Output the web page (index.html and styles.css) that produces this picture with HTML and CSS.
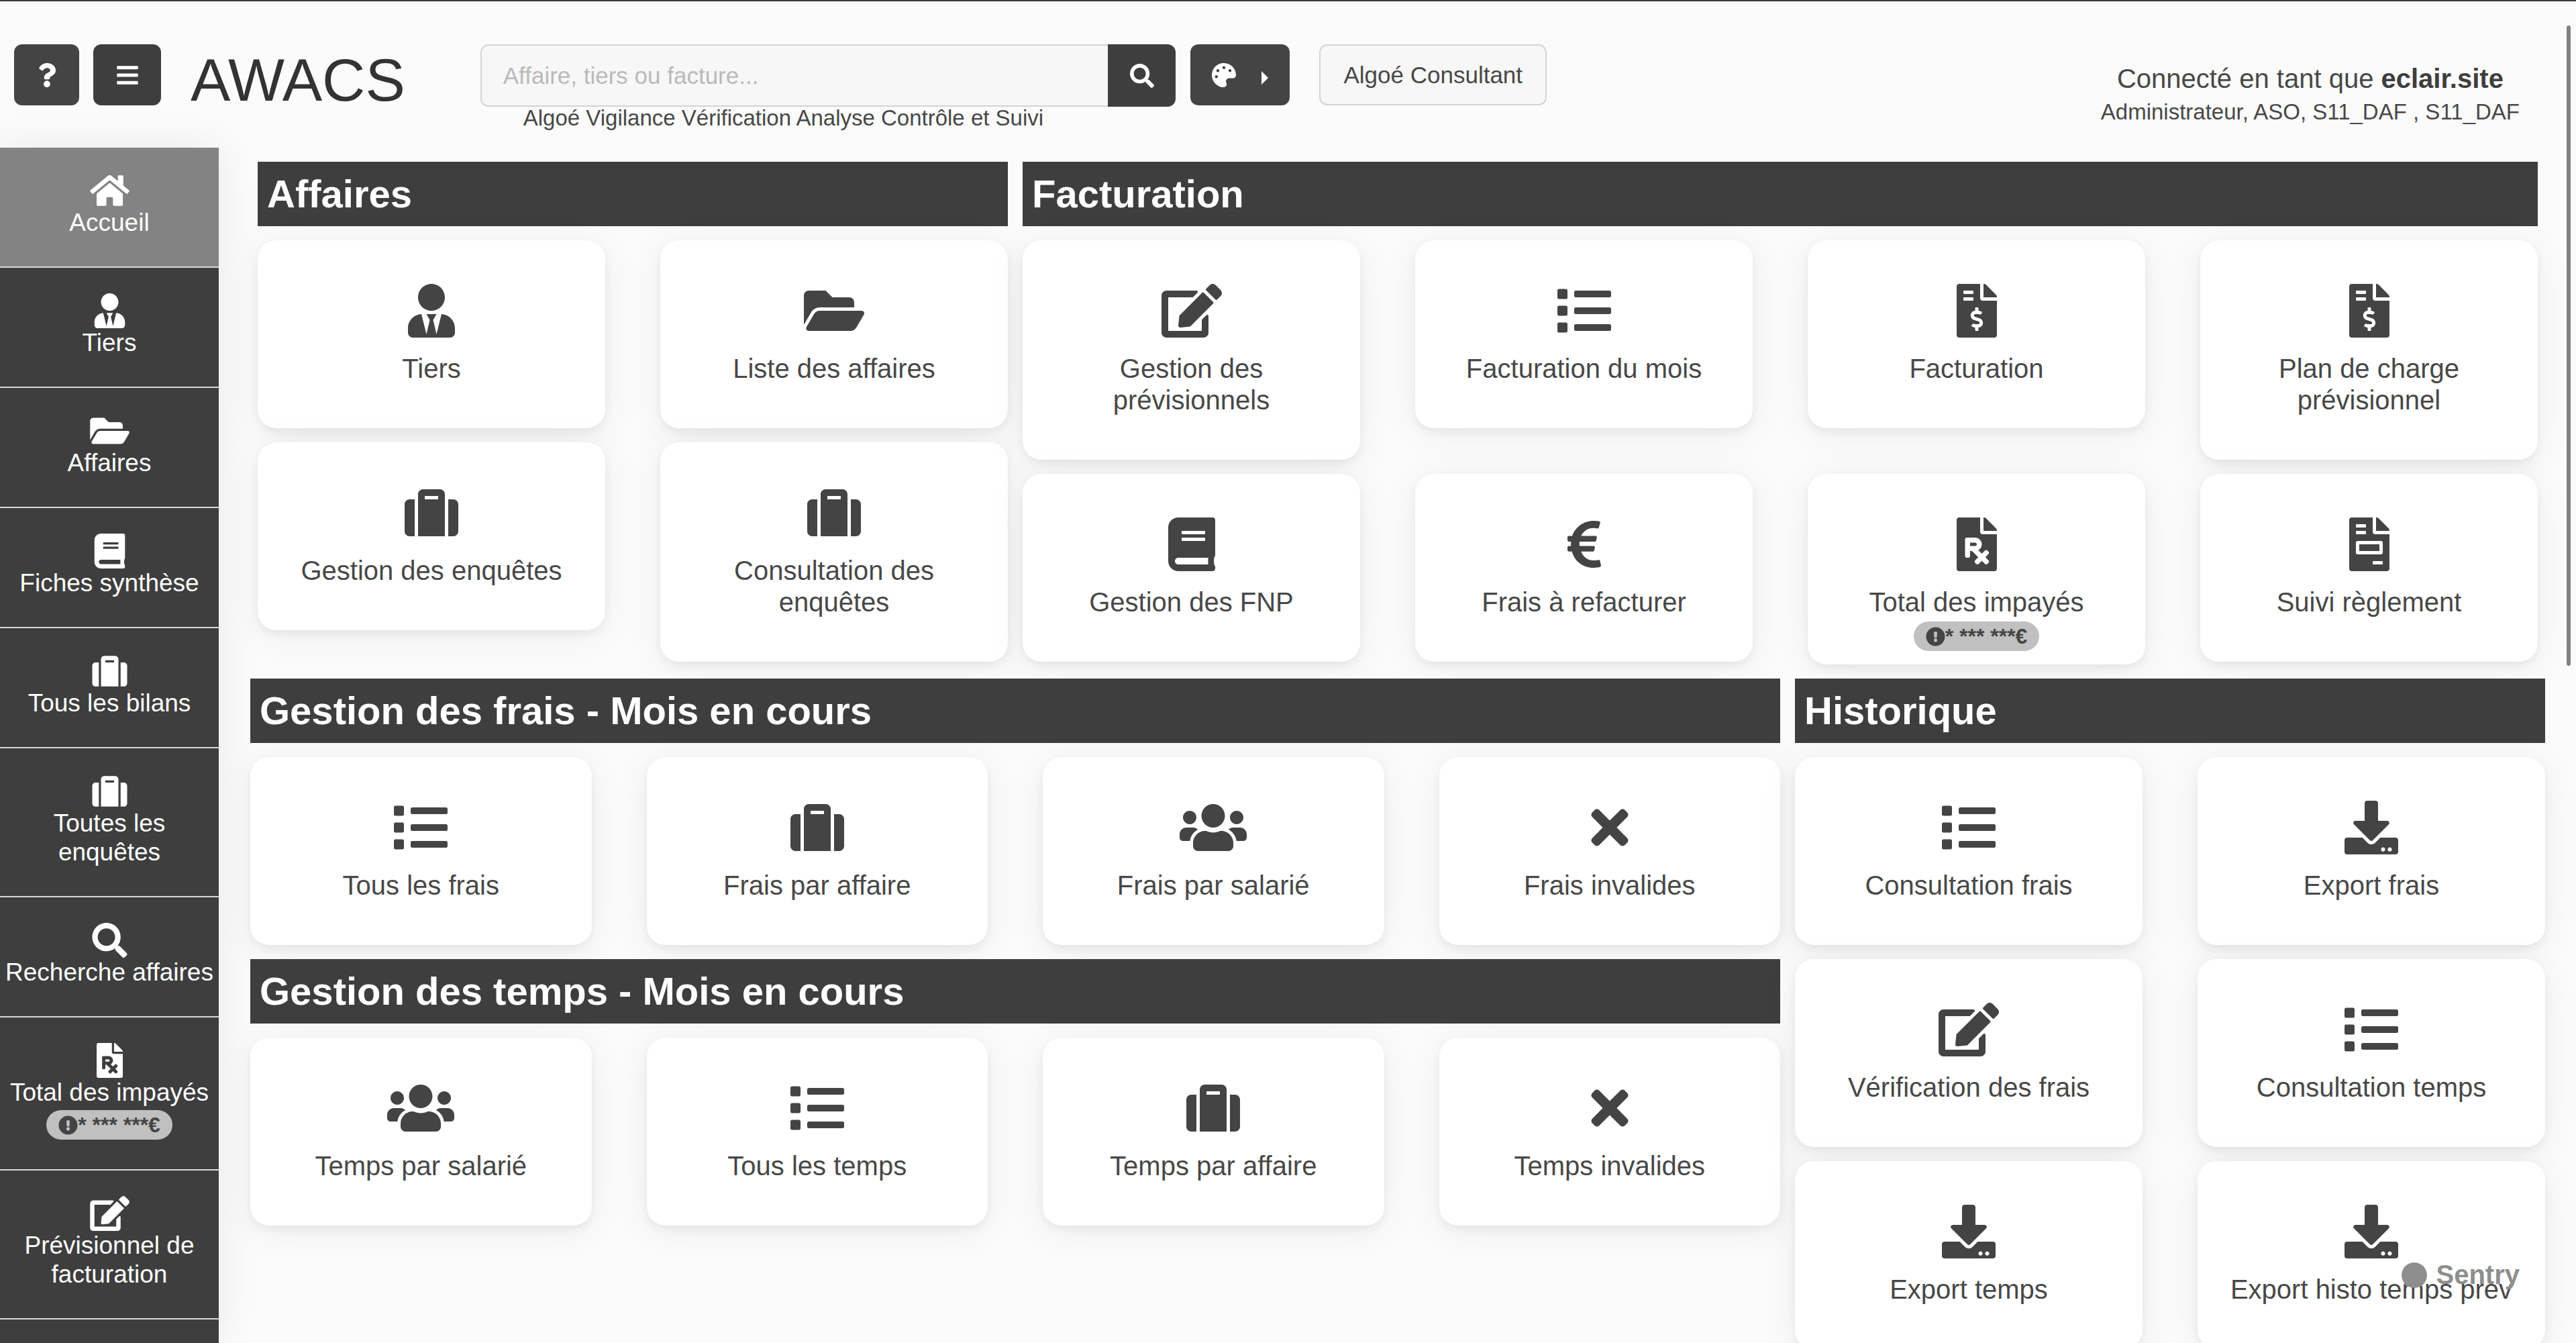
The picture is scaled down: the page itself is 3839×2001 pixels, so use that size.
FILE: index.html
```html
<!DOCTYPE html>
<html lang="fr">
<head>
<meta charset="utf-8">
<meta name="viewport" content="width=device-width, initial-scale=1">
<title>AWACS - Accueil</title>
<link rel="stylesheet" href="styles.css">
</head>
<body>
<svg class="sprite" aria-hidden="true">
  <symbol id="home" viewBox="0 0 576 512"><path d="M280.37 148.26L96 300.11V464a16 16 0 0 0 16 16l112.06-.29a16 16 0 0 0 15.92-16V368a16 16 0 0 1 16-16h64a16 16 0 0 1 16 16v95.64a16 16 0 0 0 16 16.05L464 480a16 16 0 0 0 16-16V300L295.67 148.26a12.19 12.19 0 0 0-15.3 0zM571.6 251.47L488 182.56V44.05a12 12 0 0 0-12-12h-56a12 12 0 0 0-12 12v72.61L318.47 43a48 48 0 0 0-61 0L4.34 251.47a12 12 0 0 0-1.6 16.9l25.5 31A12 12 0 0 0 45.15 301l235.22-193.74a12.19 12.19 0 0 1 15.3 0L530.9 301a12 12 0 0 0 16.9-1.6l25.5-31a12 12 0 0 0-1.7-16.93z"/></symbol>
  <symbol id="user-tie" viewBox="0 0 448 512"><path d="M224 256c70.7 0 128-57.3 128-128S294.7 0 224 0 96 57.3 96 128s57.3 128 128 128zm95.8 32.6L272 480l-32-136 32-56h-96l32 56-32 136-47.8-191.4C56.9 292 0 350.3 0 422.4V464c0 26.5 21.5 48 48 48h352c26.5 0 48-21.5 48-48v-41.6c0-72.1-56.9-130.4-128.2-133.8z"/></symbol>
  <symbol id="folder-open" viewBox="0 0 576 512"><path d="M572.694 292.093L500.27 416.248A63.997 63.997 0 0 1 444.989 448H45.025c-18.523 0-30.064-20.093-20.731-36.093l72.424-124.155A64 64 0 0 1 152 256h399.964c18.523 0 30.064 20.093 20.73 36.093zM152 224h328v-48c0-26.51-21.49-48-48-48H272l-64-64H48C21.49 64 0 85.49 0 112v278.046l69.077-118.418C86.214 242.25 117.989 224 152 224z"/></symbol>
  <symbol id="book" viewBox="0 0 448 512"><path d="M448 360V24c0-13.3-10.7-24-24-24H96C43 0 0 43 0 96v320c0 53 43 96 96 96h328c13.3 0 24-10.7 24-24v-16c0-7.5-3.5-14.3-8.9-18.7-4.2-15.4-4.2-59.3 0-74.7 5.4-4.3 8.9-11.1 8.9-18.6zM128 134c0-3.3 2.7-6 6-6h212c3.3 0 6 2.7 6 6v20c0 3.3-2.7 6-6 6H134c-3.3 0-6-2.7-6-6v-20zm0 64c0-3.3 2.7-6 6-6h212c3.3 0 6 2.7 6 6v20c0 3.3-2.7 6-6 6H134c-3.3 0-6-2.7-6-6v-20zm253.4 250H96c-17.7 0-32-14.3-32-32 0-17.6 14.4-32 32-32h285.4c-1.9 17.1-1.9 46.9 0 64z"/></symbol>
  <symbol id="suitcase" viewBox="0 0 512 512"><path d="M128 480h256V80c0-26.5-21.5-48-48-48H176c-26.5 0-48 21.5-48 48v400zm64-384h128v32H192V96zm320 80v256c0 26.5-21.5 48-48 48h-48V128h48c26.5 0 48 21.5 48 48zM96 480H48c-26.5 0-48-21.5-48-48V176c0-26.5 21.5-48 48-48h48v352z"/></symbol>
  <symbol id="search" viewBox="0 0 512 512"><path d="M505 442.7L405.3 343c-4.5-4.5-10.6-7-17-7H372c27.6-35.3 44-79.7 44-128C416 93.1 322.9 0 208 0S0 93.1 0 208s93.1 208 208 208c48.3 0 92.7-16.4 128-44v16.3c0 6.4 2.5 12.5 7 17l99.7 99.7c9.4 9.4 24.6 9.4 33.9 0l28.3-28.3c9.4-9.4 9.4-24.6.1-34zM208 336c-70.7 0-128-57.2-128-128 0-70.7 57.2-128 128-128 70.7 0 128 57.2 128 128 0 70.7-57.2 128-128 128z"/></symbol>
  <symbol id="file-rx" viewBox="0 0 384 512"><path d="M224 136V0H24C10.7 0 0 10.7 0 24v464c0 13.3 10.7 24 24 24h336c13.3 0 24-10.7 24-24V160H248c-13.2 0-24-10.8-24-24zm68.53 179.48l11.31 11.31c6.25 6.25 6.25 16.38 0 22.63l-29.9 29.9L304 409.38c6.25 6.25 6.25 16.38 0 22.63l-11.31 11.31c-6.25 6.25-16.38 6.25-22.63 0L240 413.25l-30.06 30.06c-6.25 6.25-16.38 6.25-22.63 0L176 432c-6.25-6.25-6.25-16.38 0-22.63l30.06-30.06L146.74 320H128v48c0 8.84-7.16 16-16 16H96c-8.84 0-16-7.16-16-16V208c0-8.84 7.16-16 16-16h80c35.35 0 64 28.65 64 64 0 24.22-13.62 45.05-33.46 55.92L240 345.38l29.9-29.9c6.25-6.25 16.38-6.25 22.63 0zM176 272h-48v-32h48c8.82 0 16 7.18 16 16s-7.18 16-16 16zm208-150.1v6.1H256V0h6.1c6.4 0 12.5 2.5 17 7l97.9 98c4.5 4.5 7 10.6 7 16.9z"/></symbol>
  <symbol id="edit" viewBox="0 0 576 512"><path d="M402.6 83.2l90.2 90.2c3.8 3.8 3.8 10 0 13.8L274.4 405.6l-92.8 10.3c-12.4 1.4-22.9-9.1-21.5-21.5l10.3-92.8L388.8 83.2c3.8-3.8 10-3.8 13.8 0zm162-22.9l-48.8-48.8c-15.2-15.2-39.9-15.2-55.2 0l-35.4 35.4c-3.8 3.8-3.8 10 0 13.8l90.2 90.2c3.8 3.8 10 3.8 13.8 0l35.4-35.4c15.2-15.3 15.2-40 0-55.2zM384 346.2V448H64V128h229.8c3.2 0 6.2-1.3 8.5-3.5l40-40c7.6-7.6 2.2-20.5-8.5-20.5H48C21.5 64 0 85.5 0 112v352c0 26.5 21.5 48 48 48h352c26.5 0 48-21.5 48-48V306.2c0-10.7-12.9-16-20.5-8.5l-40 40c-2.2 2.3-3.5 5.3-3.5 8.5z"/></symbol>
  <symbol id="list" viewBox="0 0 512 512"><path d="M80 368H16a16 16 0 0 0-16 16v64a16 16 0 0 0 16 16h64a16 16 0 0 0 16-16v-64a16 16 0 0 0-16-16zm0-320H16A16 16 0 0 0 0 64v64a16 16 0 0 0 16 16h64a16 16 0 0 0 16-16V64a16 16 0 0 0-16-16zm0 160H16a16 16 0 0 0-16 16v64a16 16 0 0 0 16 16h64a16 16 0 0 0 16-16v-64a16 16 0 0 0-16-16zm416 176H176a16 16 0 0 0-16 16v32a16 16 0 0 0 16 16h320a16 16 0 0 0 16-16v-32a16 16 0 0 0-16-16zm0-320H176a16 16 0 0 0-16 16v32a16 16 0 0 0 16 16h320a16 16 0 0 0 16-16V80a16 16 0 0 0-16-16zm0 160H176a16 16 0 0 0-16 16v32a16 16 0 0 0 16 16h320a16 16 0 0 0 16-16v-32a16 16 0 0 0-16-16z"/></symbol>
  <symbol id="file-dollar" viewBox="0 0 384 512"><path d="M377 105L279.1 7c-4.5-4.5-10.6-7-17-7H256v128h128v-6.1c0-6.3-2.5-12.4-7-16.9zm-153 31V0H24C10.7 0 0 10.7 0 24v464c0 13.3 10.7 24 24 24h336c13.3 0 24-10.7 24-24V160H248c-13.2 0-24-10.8-24-24zM64 72c0-4.42 3.58-8 8-8h80c4.42 0 8 3.58 8 8v16c0 4.42-3.58 8-8 8H72c-4.42 0-8-3.58-8-8V72zm0 80v-16c0-4.42 3.58-8 8-8h80c4.42 0 8 3.58 8 8v16c0 4.42-3.58 8-8 8H72c-4.42 0-8-3.58-8-8zm144 263.88V440c0 4.42-3.58 8-8 8h-16c-4.42 0-8-3.58-8-8v-24.29c-11.29-.58-22.27-4.52-31.37-11.35-3.9-2.93-4.1-8.77-.57-12.14l11.75-11.21c2.77-2.64 6.89-2.76 10.13-.73 3.87 2.42 8.26 3.72 12.82 3.72h28.11c6.5 0 11.8-5.92 11.8-13.19 0-5.95-3.61-11.19-8.77-12.73l-45-13.5c-18.59-5.58-31.58-23.42-31.58-43.39 0-24.52 19.05-44.44 42.67-45.07V232c0-4.42 3.58-8 8-8h16c4.42 0 8 3.58 8 8v24.29c11.29.58 22.27 4.51 31.37 11.35 3.9 2.93 4.1 8.77.57 12.14l-11.75 11.21c-2.77 2.64-6.89 2.76-10.13.73-3.87-2.43-8.26-3.72-12.82-3.72h-28.11c-6.5 0-11.8 5.92-11.8 13.19 0 5.95 3.61 11.19 8.77 12.73l45 13.5c18.59 5.58 31.58 23.42 31.58 43.39 0 24.53-19.05 44.44-42.67 45.07z"/></symbol>
  <symbol id="file-invoice" viewBox="0 0 384 512"><path d="M288 256H96v64h192v-64zm89-151L279.1 7c-4.5-4.5-10.6-7-17-7H256v128h128v-6.1c0-6.3-2.5-12.4-7-16.9zm-153 31V0H24C10.7 0 0 10.7 0 24v464c0 13.3 10.7 24 24 24h336c13.3 0 24-10.7 24-24V160H248c-13.2 0-24-10.8-24-24zM64 72c0-4.42 3.58-8 8-8h80c4.42 0 8 3.58 8 8v16c0 4.42-3.58 8-8 8H72c-4.42 0-8-3.58-8-8V72zm0 64c0-4.42 3.58-8 8-8h80c4.42 0 8 3.58 8 8v16c0 4.42-3.58 8-8 8H72c-4.42 0-8-3.58-8-8v-16zm256 304c0 4.42-3.58 8-8 8h-80c-4.42 0-8-3.58-8-8v-16c0-4.42 3.58-8 8-8h80c4.42 0 8 3.58 8 8v16zm0-200v96c0 8.84-7.16 16-16 16H80c-8.84 0-16-7.16-16-16v-96c0-8.84 7.16-16 16-16h224c8.84 0 16 7.16 16 16z"/></symbol>
  <symbol id="euro" viewBox="0 0 320 512"><path d="M310.706 413.765c-1.314-6.63-7.835-10.872-14.424-9.369-10.692 2.439-27.422 5.413-45.426 5.413-56.763 0-101.929-34.79-121.461-85.449h113.689a12 12 0 0 0 11.708-9.369l6.373-28.36c1.686-7.502-4.019-14.631-11.708-14.631H115.22c-1.21-14.328-1.414-28.287.137-42.245H261.95a12 12 0 0 0 11.723-9.434l6.512-29.755c1.638-7.484-4.061-14.566-11.723-14.566H130.184c20.633-44.991 62.69-75.03 117.619-75.03 14.486 0 28.564 2.25 37.851 4.145 6.216 1.268 12.347-2.498 14.002-8.623l11.991-44.368c1.822-6.741-2.465-13.616-9.326-14.917C290.217 34.912 270.71 32 249.635 32 152.451 32 74.03 92.252 45.075 176H12c-6.627 0-12 5.373-12 12v29.755c0 6.627 5.373 12 12 12h21.569c-1.009 13.607-1.181 29.287-.181 42.245H12c-6.627 0-12 5.373-12 12v28.36c0 6.627 5.373 12 12 12h30.114C67.139 414.692 145.264 480 249.635 480c26.301 0 48.562-4.544 61.101-7.788 6.167-1.595 10.027-7.708 8.788-13.957l-8.818-44.49z"/></symbol>
  <symbol id="users" viewBox="0 0 640 512"><path d="M96 224c35.3 0 64-28.7 64-64s-28.7-64-64-64-64 28.7-64 64 28.7 64 64 64zm448 0c35.3 0 64-28.7 64-64s-28.7-64-64-64-64 28.7-64 64 28.7 64 64 64zm32 32h-64c-17.6 0-33.5 7.1-45.1 18.6 40.3 22.1 68.9 62 75.1 109.4h66c17.7 0 32-14.3 32-32v-32c0-35.3-28.7-64-64-64zm-256 0c61.9 0 112-50.1 112-112S381.9 32 320 32 208 82.1 208 144s50.1 112 112 112zm76.8 32h-8.3c-20.8 10-43.9 16-68.5 16s-47.6-6-68.5-16h-8.3C179.6 288 128 339.6 128 403.2V432c0 26.5 21.5 48 48 48h288c26.5 0 48-21.5 48-48v-28.8c0-63.6-51.6-115.2-115.2-115.2zm-223.7-13.4C161.5 263.1 145.6 256 128 256H64c-35.3 0-64 28.7-64 64v32c0 17.7 14.3 32 32 32h65.9c6.3-47.4 34.9-87.3 75.2-109.4z"/></symbol>
  <symbol id="times" viewBox="0 0 352 512"><path d="M242.72 256l100.07-100.07c12.28-12.28 12.28-32.19 0-44.48l-22.24-22.24c-12.28-12.28-32.19-12.28-44.48 0L176 189.28 75.93 89.21c-12.28-12.28-32.19-12.28-44.48 0L9.21 111.45c-12.28 12.28-12.28 32.19 0 44.48L109.28 256 9.21 356.07c-12.28 12.28-12.28 32.19 0 44.48l22.24 22.24c12.28 12.28 32.2 12.28 44.48 0L176 322.72l100.07 100.07c12.28 12.28 32.2 12.28 44.48 0l22.24-22.24c12.28-12.28 12.28-32.19 0-44.48L242.72 256z"/></symbol>
  <symbol id="download" viewBox="0 0 512 512"><path d="M216 0h80c13.3 0 24 10.7 24 24v168h87.7c17.8 0 26.7 21.5 14.1 34.1L269.7 378.3c-7.5 7.5-19.8 7.5-27.3 0L90.1 226.1c-12.6-12.6-3.7-34.1 14.1-34.1H192V24c0-13.3 10.7-24 24-24zm296 376v112c0 13.3-10.7 24-24 24H24c-13.3 0-24-10.7-24-24V376c0-13.3 10.7-24 24-24h146.7l49 49c20.1 20.1 52.5 20.1 72.6 0l49-49H488c13.3 0 24 10.7 24 24zm-124 88c0-11-9-20-20-20s-20 9-20 20 9 20 20 20 20-9 20-20zm64 0c0-11-9-20-20-20s-20 9-20 20 9 20 20 20 20-9 20-20z"/></symbol>
  <symbol id="question" viewBox="0 0 384 512"><path d="M202.021 0C122.202 0 70.503 32.703 29.914 91.026c-7.363 10.58-5.093 25.086 5.178 32.874l43.138 32.709c10.373 7.865 25.132 6.026 33.253-4.148 25.049-31.381 43.63-49.449 82.757-49.449 30.764 0 68.816 19.799 68.816 49.631 0 22.552-18.617 34.134-48.993 51.164-35.423 19.86-82.299 44.576-82.299 106.405V320c0 13.255 10.745 24 24 24h72.471c13.255 0 24-10.745 24-24v-5.773c0-42.86 125.268-44.645 125.268-160.627C377.504 66.256 286.902 0 202.021 0zM192 373.459c-38.196 0-69.271 31.075-69.271 69.271 0 38.195 31.075 69.27 69.271 69.27s69.271-31.075 69.271-69.271-31.075-69.27-69.271-69.27z"/></symbol>
  <symbol id="bars" viewBox="0 0 448 512"><rect y="60" width="448" height="72" rx="16"/><rect y="220" width="448" height="72" rx="16"/><rect y="380" width="448" height="72" rx="16"/></symbol>
  <symbol id="palette" viewBox="0 0 512 512"><path d="M204.3 5C104.9 24.4 24.8 104.3 5.2 203.4c-37 187 131.7 326.4 258.8 306.7 41.2-6.4 61.4-54.6 42.5-91.7-23.1-45.4 9.9-98.4 60.9-98.4h79.7c35.8 0 64.8-29.6 64.9-65.3C511.5 97.1 368.1-26.9 204.3 5zM96 320c-17.7 0-32-14.3-32-32s14.3-32 32-32 32 14.3 32 32-14.3 32-32 32zm32-128c-17.7 0-32-14.3-32-32s14.3-32 32-32 32 14.3 32 32-14.3 32-32 32zm128-64c-17.7 0-32-14.3-32-32s14.3-32 32-32 32 14.3 32 32-14.3 32-32 32zm128 64c-17.7 0-32-14.3-32-32s14.3-32 32-32 32 14.3 32 32-14.3 32-32 32z"/></symbol>
  <symbol id="alert" viewBox="0 0 512 512"><path d="M504 256c0 136.997-111.043 248-248 248S8 392.997 8 256C8 119.083 119.043 8 256 8s248 111.083 248 248zm-248 50c-25.405 0-46 20.595-46 46s20.595 46 46 46 46-20.595 46-46-20.595-46-46-46zm-43.673-165.346l7.418 136c.347 6.364 5.609 11.346 11.982 11.346h48.546c6.373 0 11.635-4.982 11.982-11.346l7.418-136c.375-6.874-5.098-12.654-11.982-12.654h-63.383c-6.884 0-12.356 5.78-11.981 12.654z"/></symbol>
</svg>

<div class="app">
  <header class="topbar">
    <div class="tools">
      <button class="btn btn-help" type="button" aria-label="Aide"><svg class="icon-sm"><use href="#question"/></svg></button>
      <button class="btn btn-menu" type="button" aria-label="Menu"><svg class="icon-sm"><use href="#bars"/></svg></button>
    </div>
    <div class="brand">AWACS</div>
    <div class="search">
      <form class="search-row">
        <input class="search-input" type="text" placeholder="Affaire, tiers ou facture..." aria-label="Recherche">
        <button class="btn btn-search" type="button" aria-label="Rechercher"><svg class="icon-sm"><use href="#search"/></svg></button>
      </form>
      <div class="tagline">Algoé Vigilance Vérification Analyse Contrôle et Suivi</div>
    </div>
    <button class="btn btn-theme" type="button" aria-label="Thème"><svg class="icon-sm"><use href="#palette"/></svg><span class="caret"></span></button>
    <button class="btn btn-company" type="button">Algoé Consultant</button>
    <div class="account">
      <div class="account-name">Connecté en tant que <b>eclair.site</b></div>
      <div class="account-roles">Administrateur, ASO, S11_DAF , S11_DAF</div>
    </div>
  </header>

  <div class="body">
    <nav class="sidebar">
      <a class="nav-item active" href="#"><svg class="nav-icon"><use href="#home"/></svg><span>Accueil</span></a>
      <a class="nav-item" href="#"><svg class="nav-icon"><use href="#user-tie"/></svg><span>Tiers</span></a>
      <a class="nav-item" href="#"><svg class="nav-icon"><use href="#folder-open"/></svg><span>Affaires</span></a>
      <a class="nav-item" href="#"><svg class="nav-icon"><use href="#book"/></svg><span>Fiches synthèse</span></a>
      <a class="nav-item" href="#"><svg class="nav-icon"><use href="#suitcase"/></svg><span>Tous les bilans</span></a>
      <a class="nav-item" href="#"><svg class="nav-icon"><use href="#suitcase"/></svg><span>Toutes les<br>enquêtes</span></a>
      <a class="nav-item" href="#"><svg class="nav-icon"><use href="#search"/></svg><span>Recherche affaires</span></a>
      <a class="nav-item" href="#"><svg class="nav-icon"><use href="#file-rx"/></svg><span>Total des impayés</span><span class="badge"><svg class="badge-icon"><use href="#alert"/></svg>* *** ***€</span></a>
      <a class="nav-item" href="#"><svg class="nav-icon"><use href="#edit"/></svg><span>Prévisionnel de<br>facturation</span></a>
    </nav>

    <main class="content">
      <div class="row row-top">
        <section class="panel">
          <h2 class="panel-title">Affaires</h2>
          <div class="cards cols-2">
            <a class="card" href="#"><svg class="card-icon"><use href="#user-tie"/></svg><span>Tiers</span></a>
            <a class="card" href="#"><svg class="card-icon"><use href="#folder-open"/></svg><span>Liste des affaires</span></a>
            <a class="card" href="#"><svg class="card-icon"><use href="#suitcase"/></svg><span>Gestion des enquêtes</span></a>
            <a class="card" href="#"><svg class="card-icon"><use href="#suitcase"/></svg><span>Consultation des enquêtes</span></a>
          </div>
        </section>
        <section class="panel">
          <h2 class="panel-title">Facturation</h2>
          <div class="cards cols-4">
            <a class="card" href="#"><svg class="card-icon"><use href="#edit"/></svg><span>Gestion des prévisionnels</span></a>
            <a class="card" href="#"><svg class="card-icon"><use href="#list"/></svg><span>Facturation du mois</span></a>
            <a class="card" href="#"><svg class="card-icon"><use href="#file-dollar"/></svg><span>Facturation</span></a>
            <a class="card" href="#"><svg class="card-icon"><use href="#file-dollar"/></svg><span>Plan de charge prévisionnel</span></a>
            <a class="card" href="#"><svg class="card-icon"><use href="#book"/></svg><span>Gestion des FNP</span></a>
            <a class="card" href="#"><svg class="card-icon"><use href="#euro"/></svg><span>Frais à refacturer</span></a>
            <a class="card card-badged" href="#"><svg class="card-icon"><use href="#file-rx"/></svg><span>Total des impayés</span><span class="badge"><svg class="badge-icon"><use href="#alert"/></svg>* *** ***€</span></a>
            <a class="card" href="#"><svg class="card-icon"><use href="#file-invoice"/></svg><span>Suivi règlement</span></a>
          </div>
        </section>
      </div>

      <div class="row row-bottom">
        <div class="stack">
          <section class="panel">
            <h2 class="panel-title">Gestion des frais - Mois en cours</h2>
            <div class="cards cols-4">
              <a class="card" href="#"><svg class="card-icon"><use href="#list"/></svg><span>Tous les frais</span></a>
              <a class="card" href="#"><svg class="card-icon"><use href="#suitcase"/></svg><span>Frais par affaire</span></a>
              <a class="card" href="#"><svg class="card-icon"><use href="#users"/></svg><span>Frais par salarié</span></a>
              <a class="card" href="#"><svg class="card-icon"><use href="#times"/></svg><span>Frais invalides</span></a>
            </div>
          </section>
          <section class="panel">
            <h2 class="panel-title">Gestion des temps - Mois en cours</h2>
            <div class="cards cols-4">
              <a class="card" href="#"><svg class="card-icon"><use href="#users"/></svg><span>Temps par salarié</span></a>
              <a class="card" href="#"><svg class="card-icon"><use href="#list"/></svg><span>Tous les temps</span></a>
              <a class="card" href="#"><svg class="card-icon"><use href="#suitcase"/></svg><span>Temps par affaire</span></a>
              <a class="card" href="#"><svg class="card-icon"><use href="#times"/></svg><span>Temps invalides</span></a>
            </div>
          </section>
        </div>
        <section class="panel panel-history">
          <h2 class="panel-title">Historique</h2>
          <div class="cards cols-2">
            <a class="card" href="#"><svg class="card-icon"><use href="#list"/></svg><span>Consultation frais</span></a>
            <a class="card" href="#"><svg class="card-icon"><use href="#download"/></svg><span>Export frais</span></a>
            <a class="card" href="#"><svg class="card-icon"><use href="#edit"/></svg><span>Vérification des frais</span></a>
            <a class="card" href="#"><svg class="card-icon"><use href="#list"/></svg><span>Consultation temps</span></a>
            <a class="card" href="#"><svg class="card-icon"><use href="#download"/></svg><span>Export temps</span></a>
            <a class="card" href="#"><svg class="card-icon"><use href="#download"/></svg><span>Export histo temps prev</span></a>
          </div>
        </section>
      </div>
    </main>
  </div>

  <div class="scroll-thumb"></div>
  <div class="sentry"><span class="sentry-dot"></span>Sentry</div>
</div>
</body>
</html>
```
FILE: styles.css
```css
* {
  box-sizing: border-box;
}

body {
  margin: 0;
  background: #fbfbfb;
  color: #484848;
  font-family: "Liberation Sans", Arial, sans-serif;
  font-size: 40px;
  line-height: 47px;
}

a {
  color: inherit;
  text-decoration: none;
}

svg {
  display: block;
  fill: currentColor;
}

.sprite {
  position: absolute;
  width: 0;
  height: 0;
}

.app {
  position: relative;
  display: flex;
  flex-direction: column;
  height: 100vh;
  overflow: hidden;
  border-top: 2px solid #3a3a3a;
}

/* Header */
.topbar {
  flex: none;
  display: flex;
  align-items: flex-start;
  height: 218px;
  padding: 64px 84px 0 21px;
}

.tools {
  display: flex;
  gap: 21px;
}

.btn {
  display: flex;
  align-items: center;
  justify-content: center;
  height: 91px;
  margin: 0;
  padding: 0;
  border: 0;
  border-radius: 12px;
  background: #444;
  color: #fff;
  font-family: inherit;
  font-size: 35px;
}

.icon-sm {
  width: 36px;
  height: 36px;
}

.btn-help {
  width: 97px;
}

.btn-menu {
  width: 101px;
  background: #3e3e3e;
}

.brand {
  margin: 4px 112px 0 44px;
  color: #333;
  font-size: 89px;
  line-height: 98px;
}

.search {
  width: 27vw;
}

.search-row {
  display: flex;
  height: 93px;
  margin: 0;
}

.search-input {
  flex: 1;
  min-width: 0;
  padding: 0 32px;
  border: 2px solid #d4d4d4;
  border-right: 0;
  border-radius: 12px 0 0 12px;
  background: #f7f7f7;
  color: #444;
  font-family: inherit;
  font-size: 35px;
}

.search-input::placeholder {
  color: #bababa;
  opacity: 1;
}

.btn-search {
  width: 101px;
  height: 93px;
  border-radius: 0 12px 12px 0;
  background: #3e3e3e;
}

.tagline {
  padding-left: 64px;
  font-size: 33px;
  line-height: 34px;
  white-space: nowrap;
}

.btn-theme {
  width: 148px;
  margin: 0 44px 0 22px;
  gap: 38px;
}

.caret {
  margin-top: 8px;
  border: solid transparent;
  border-width: 10px 0 10px 10px;
  border-left-color: #fff;
}

.btn-company {
  width: 339px;
  border: 2px solid #d4d4d4;
  background: #f7f7f7;
  color: #484848;
}

.account {
  margin: 27px 0 0 auto;
  text-align: center;
  white-space: nowrap;
}

.account-name {
  line-height: 48px;
}

.account-name b {
  color: #3e3e3e;
}

.account-roles {
  font-size: 33px;
  line-height: 52px;
}

/* Sidebar */
.body {
  flex: 1;
  display: flex;
  min-height: 0;
}

.sidebar {
  flex: none;
  width: 326px;
  background: #3e3e3e;
  color: #fff;
  font-size: 37px;
  line-height: 43px;
  box-shadow: 0 0 60px rgba(0, 0, 0, .08);
}

.nav-item {
  display: flex;
  flex-direction: column;
  align-items: center;
  padding: 38px 0 44px;
  border-bottom: 2px solid #d8d8d8;
  text-align: center;
  white-space: nowrap;
}

.nav-item.active {
  background: #838383;
}

.nav-icon {
  width: 65px;
  height: 52px;
}

.badge {
  display: flex;
  align-items: center;
  height: 44px;
  margin-top: 5px;
  padding: 0 18px;
  border-radius: 22px;
  background: #c0c0c0;
  color: #444;
  font-size: 32px;
  font-weight: bold;
}

.badge-icon {
  width: 29px;
  height: 29px;
}

/* Dashboard */
.content {
  flex: 1;
  min-width: 0;
  padding: 21px 46px 0 47px;
}

.row {
  display: grid;
}

.row-top {
  grid-template-columns: repeat(12, 1fr);
  column-gap: 22px;
  margin: 0 11px 21px;
}

.row-top .panel:first-child {
  grid-column: span 4;
}

.row-top .panel:last-child {
  grid-column: span 8;
}

.row-bottom {
  grid-template-columns: 2fr 1fr;
}

.stack {
  display: grid;
  align-content: start;
  row-gap: 21px;
}

.panel-history {
  padding-left: 22px;
}

.panel-title {
  margin: 0 0 21px;
  padding: 0 14px;
  background: #3e3e3e;
  color: #fff;
  font-size: 58px;
  line-height: 96px;
}

.cards {
  display: grid;
  align-items: start;
  gap: 21px 82px;
}

.cols-2 {
  grid-template-columns: repeat(2, 1fr);
}

.cols-4 {
  grid-template-columns: repeat(4, 1fr);
}

.card {
  display: flex;
  flex-direction: column;
  align-items: center;
  padding: 65px 32px;
  border-radius: 28px;
  background: #fff;
  text-align: center;
  box-shadow: 0 6px 14px rgba(0, 0, 0, .06), 0 8px 60px rgba(0, 0, 0, .06);
}

.card-icon {
  width: 100px;
  height: 80px;
  margin-bottom: 23px;
  color: #444;
}

.card-badged {
  padding-bottom: 20px;
}

/* Overlays */
.scroll-thumb {
  position: absolute;
  top: 36px;
  right: 8px;
  width: 6px;
  height: 954px;
  border-radius: 3px;
  background: #828282;
}

.sentry {
  position: absolute;
  right: 84px;
  bottom: 78px;
  display: flex;
  align-items: center;
  gap: 14px;
  color: #8e8e8e;
  font-weight: bold;
}

.sentry-dot {
  width: 38px;
  height: 38px;
  border-radius: 50%;
  background: #8e8e8e;
}
```
